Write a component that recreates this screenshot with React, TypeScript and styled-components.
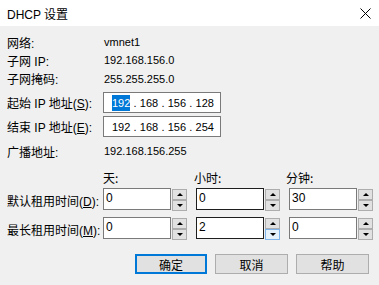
import React from 'react'
import styled, { createGlobalStyle } from 'styled-components'

const GlobalStyle = createGlobalStyle`
  html, body {
    margin: 0;
    padding: 0;
    background: #f0f0f0;
  }
  body {
    font-family: "Noto Sans CJK SC", sans-serif;
    font-size: 12px;
    color: #000;
  }
`

const Dialog = styled.div`
  width: 379px;
  height: 285px;
  display: flex;
  flex-direction: column;
  background: #f0f0f0;
  overflow: hidden;
`

const TitleBar = styled.div`
  height: 26px;
  background: #fff;
  display: flex;
  align-items: center;
  justify-content: space-between;
  padding: 0 8px 0 7px;
`

const Title = styled.span`
  font-family: "Liberation Sans", "Noto Sans CJK SC", sans-serif;
  font-size: 12px;
`

const Body = styled.div`
  padding: 7px 0 0 7px;
  display: flex;
  flex-direction: column;
`

const Row = styled.div<{ $h: number; $mt?: number }>`
  height: ${(p) => p.$h}px;
  margin-top: ${(p) => p.$mt ?? 0}px;
  display: flex;
  align-items: center;
`

const Label = styled.div`
  width: 96px;
  flex: none;
  white-space: nowrap;
  font-family: "Liberation Sans", "Noto Sans CJK SC", sans-serif;
`

const Value = styled.div`
  font-family: "Liberation Sans", sans-serif;
  font-size: 11px;
  padding-left: 1px;
`

const IpBox = styled.div`
  width: 108px;
  height: 19px;
  border: 1px solid #7a7a7a;
  background: #fff;
  display: flex;
  align-items: center;
  padding-left: 8px;
  box-sizing: content-box;
  font-family: "Liberation Sans", sans-serif;
  font-size: 11px;
`

const Octet = styled.span<{ $sel?: boolean }>`
  background: ${(p) => (p.$sel ? '#0078d7' : 'transparent')};
  color: ${(p) => (p.$sel ? '#fff' : '#000')};
  padding: 1px 0;
  line-height: 14px;
`

const Dot = styled.span`
  display: inline-block;
  width: 9.5px;
  text-align: center;
`

const HeadCell = styled.div<{ $w: number }>`
  width: ${(p) => p.$w}px;
  flex: none;
`

const Spin = styled.div`
  display: flex;
  align-items: stretch;
  margin-right: 9px;
`

const SpinInput = styled.div<{ $dark?: boolean }>`
  width: 64px;
  height: 17px;
  border: 1px solid ${(p) => (p.$dark ? '#1e1e1e' : '#7a7a7a')};
  background: #fff;
  padding: 0 0 3px 2px;
  box-sizing: content-box;
  display: flex;
  align-items: center;
  font-family: "Liberation Sans", sans-serif;
  font-size: 12px;
`

const SpinButtons = styled.div`
  display: flex;
  flex-direction: column;
  justify-content: space-between;
  margin-left: 1px;
  padding: 1px 0;
`

const SpinBtn = styled.div<{ $hover?: boolean }>`
  width: 13px;
  height: 9px;
  border: 1px solid ${(p) => (p.$hover ? '#7eb4ea' : '#adadad')};
  background: ${(p) => (p.$hover ? '#e5f1fb' : '#e1e1e1')};
  display: flex;
  align-items: center;
  justify-content: center;
`

const Arrow = styled.span<{ $up?: boolean }>`
  width: 0;
  height: 0;
  border-left: 3px solid transparent;
  border-right: 3px solid transparent;
  ${(p) => (p.$up ? 'border-bottom: 3px solid #000;' : 'border-top: 3px solid #000;')}
`

const Buttons = styled.div`
  display: flex;
  justify-content: flex-end;
  gap: 8px;
  padding-right: 10px;
  margin-top: 14px;
`

const Button = styled.div<{ $primary?: boolean }>`
  width: ${(p) => (p.$primary ? 68 : 71)}px;
  height: ${(p) => (p.$primary ? 16 : 18)}px;
  border: ${(p) => (p.$primary ? '2px solid #0078d7' : '1px solid #adadad')};
  background: #e1e1e1;
  display: flex;
  align-items: center;
  justify-content: center;
  font-size: 12px;
`

const CloseIcon = () => (
  <svg width="11" height="11" viewBox="0 0 11 11">
    <path d="M0.5 0.5 L10.5 10.5 M10.5 0.5 L0.5 10.5" stroke="#000" strokeWidth="1" />
  </svg>
)

function SpinBox({ value, dark, hoverDown }: { value: string; dark?: boolean; hoverDown?: boolean }) {
  return (
    <Spin>
      <SpinInput $dark={dark}>{value}</SpinInput>
      <SpinButtons>
        <SpinBtn>
          <Arrow $up />
        </SpinBtn>
        <SpinBtn $hover={hoverDown}>
          <Arrow />
        </SpinBtn>
      </SpinButtons>
    </Spin>
  )
}

function IpField({ octets, selectFirst }: { octets: string[]; selectFirst?: boolean }) {
  return (
    <IpBox>
      {octets.map((o, i) => (
        <React.Fragment key={i}>
          {i > 0 && <Dot>.</Dot>}
          <Octet $sel={selectFirst && i === 0}>{o}</Octet>
        </React.Fragment>
      ))}
    </IpBox>
  )
}

export default function App() {
  return (
    <>
      <GlobalStyle />
      <Dialog>
        <TitleBar>
          <Title>DHCP 设置</Title>
          <CloseIcon />
        </TitleBar>
        <Body>
          <Row $h={18}>
            <Label>网络:</Label>
            <Value>vmnet1</Value>
          </Row>
          <Row $h={18}>
            <Label>子网 IP:</Label>
            <Value>192.168.156.0</Value>
          </Row>
          <Row $h={19}>
            <Label>子网掩码:</Label>
            <Value>255.255.255.0</Value>
          </Row>
          <Row $h={21} $mt={4}>
            <Label>起始 IP 地址(<u>S</u>):</Label>
            <IpField octets={['192', '168', '156', '128']} selectFirst />
          </Row>
          <Row $h={21} $mt={3}>
            <Label>结束 IP 地址(<u>E</u>):</Label>
            <IpField octets={['192', '168', '156', '254']} />
          </Row>
          <Row $h={18} $mt={5}>
            <Label>广播地址:</Label>
            <Value>192.168.156.255</Value>
          </Row>
          <Row $h={18} $mt={8}>
            <Label />
            <HeadCell $w={91}>天:</HeadCell>
            <HeadCell $w={92}>小时:</HeadCell>
            <HeadCell $w={60}>分钟:</HeadCell>
          </Row>
          <Row $h={22} $mt={3}>
            <Label>默认租用时间(<u>D</u>):</Label>
            <SpinBox value="0" />
            <SpinBox value="0" dark />
            <SpinBox value="30" />
          </Row>
          <Row $h={22} $mt={7}>
            <Label>最长租用时间(<u>M</u>):</Label>
            <SpinBox value="0" />
            <SpinBox value="2" dark hoverDown />
            <SpinBox value="0" />
          </Row>
          <Buttons>
            <Button $primary>确定</Button>
            <Button>取消</Button>
            <Button>帮助</Button>
          </Buttons>
        </Body>
      </Dialog>
    </>
  )
}
